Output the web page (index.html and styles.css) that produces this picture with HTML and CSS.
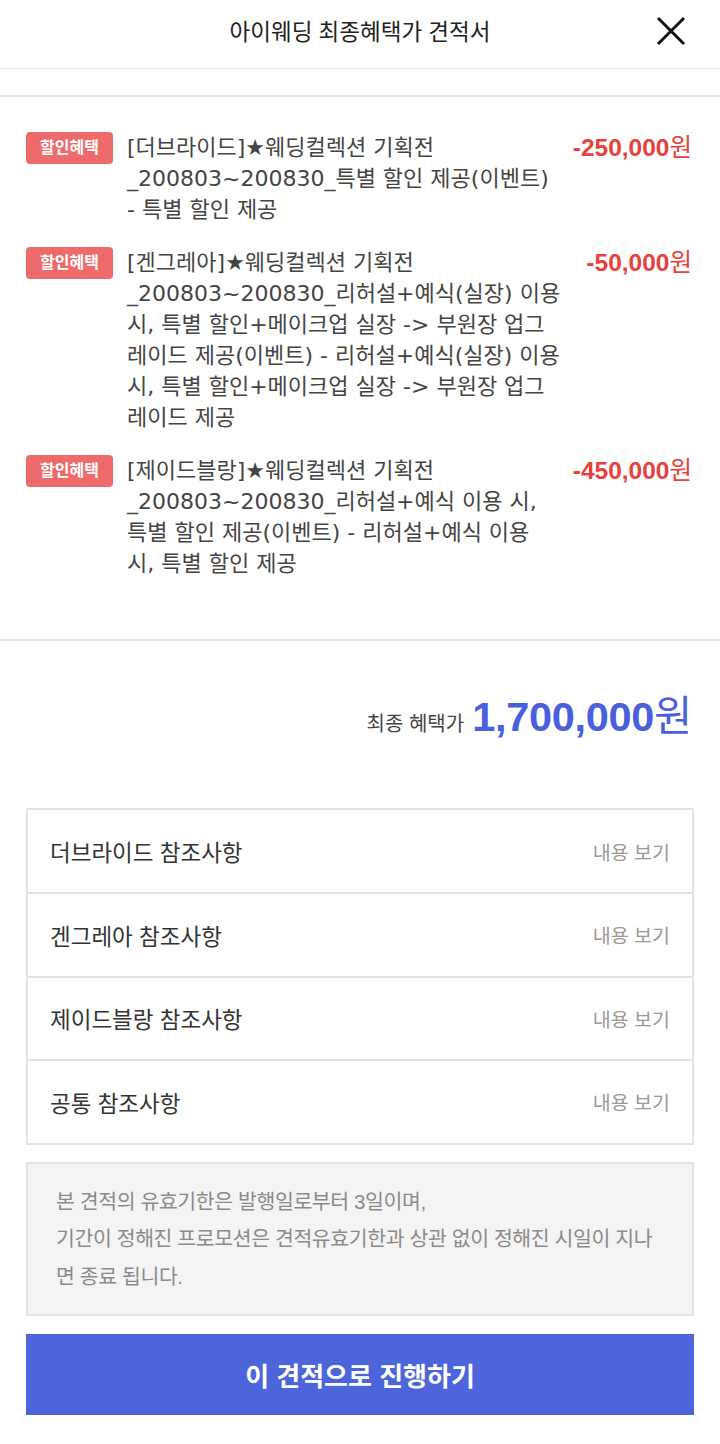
FILE: index.html
```html
<!DOCTYPE html>
<html lang="ko">

<head>
    <meta charset="UTF-8">
    <meta name="viewport" content="width=device-width, initial-scale=1.0">
    <title>아이웨딩 최종혜택가 견적서</title>
    <link rel="stylesheet" href="styles.css">
</head>

<body>
    <header class="top-bar">
        <h1 class="top-title">아이웨딩 최종혜택가 견적서</h1>
        <button class="close-btn" type="button" aria-label="닫기">
            <svg width="32" height="32" viewBox="0 0 32 32">
                <path d="M3 3 L29 29 M29 3 L3 29" stroke="#111" stroke-width="3" fill="none" />
            </svg>
        </button>
    </header>
    <div class="spacer"></div>

    <section class="benefits">
        <div class="benefit">
            <span class="badge">할인혜택</span>
            <p class="benefit-text">[더브라이드]★웨딩컬렉션 기획전 _200803~200830_특별 할인 제공(이벤트) - 특별 할인 제공</p>
            <span class="benefit-price"><b>-250,000</b>원</span>
        </div>
        <div class="benefit">
            <span class="badge">할인혜택</span>
            <p class="benefit-text">[겐그레아]★웨딩컬렉션 기획전 _200803~200830_리허설+예식(실장) 이용 시, 특별 할인+메이크업 실장 -&gt; 부원장 업그레이드 제공(이벤트) - 리허설+예식(실장) 이용 시, 특별 할인+메이크업 실장 -&gt; 부원장 업그레이드 제공</p>
            <span class="benefit-price"><b>-50,000</b>원</span>
        </div>
        <div class="benefit">
            <span class="badge">할인혜택</span>
            <p class="benefit-text">[제이드블랑]★웨딩컬렉션 기획전 _200803~200830_리허설+예식 이용 시, 특별 할인 제공(이벤트) - 리허설+예식 이용 시, 특별 할인 제공</p>
            <span class="benefit-price"><b>-450,000</b>원</span>
        </div>
    </section>

    <section class="summary">
        <div class="total">
            <span class="total-label">최종 혜택가</span>
            <span class="total-amount"><b>1,700,000</b>원</span>
        </div>

        <ul class="notes">
            <li><span>더브라이드 참조사항</span><a href="#">내용 보기</a></li>
            <li><span>겐그레아 참조사항</span><a href="#">내용 보기</a></li>
            <li><span>제이드블랑 참조사항</span><a href="#">내용 보기</a></li>
            <li><span>공통 참조사항</span><a href="#">내용 보기</a></li>
        </ul>

        <div class="notice">
            본 견적의 유효기한은 발행일로부터 3일이며,<br>
            기간이 정해진 프로모션은 견적유효기한과 상관 없이 정해진 시일이 지나면 종료 됩니다.
        </div>

        <button class="proceed-btn" type="button">이 견적으로 진행하기</button>
    </section>
</body>

</html>
```

FILE: styles.css
```css
* {
    margin: 0;
    padding: 0;
    box-sizing: border-box;
}

body {
    font-family: "Liberation Sans", "Noto Sans CJK KR", sans-serif;
    background: #fff;
    color: #333;
    width: 720px;
}

.top-bar {
    height: 69px;
    border-bottom: 1px solid #e6e6e6;
    display: flex;
    align-items: center;
    justify-content: center;
    position: relative;
}

.top-title {
    font-size: 22.5px;
    font-weight: normal;
    color: #222;
    margin-top: -8px;
}

.close-btn {
    position: absolute;
    right: 33px;
    top: 15px;
    border: none;
    background: none;
    width: 32px;
    height: 32px;
}

.spacer {
    height: 28px;
    border-bottom: 2px solid #e6e6e6;
}

.benefits {
    padding: 35px 28px 60px 26px;
    border-bottom: 2px solid #e6e6e6;
    display: flex;
    flex-direction: column;
    gap: 22px;
}

.benefit {
    display: flex;
    align-items: flex-start;
}

.badge {
    flex: none;
    width: 87px;
    height: 32px;
    line-height: 32px;
    background: #ee6b6b;
    color: #fff;
    font-size: 16px;
    font-weight: bold;
    text-align: center;
    border-radius: 4px;
}

.benefit-text {
    width: 436px;
    margin-left: 14px;
    font-family: "DejaVu Sans", "Noto Sans CJK KR", sans-serif;
    font-size: 22px;
    line-height: 31px;
    color: #444;
}

.benefit-price {
    flex: 1;
    text-align: right;
    font-size: 24.5px;
    line-height: 31px;
    color: #e8413b;
}

.summary {
    padding: 0 26px;
}

.total {
    display: flex;
    justify-content: flex-end;
    align-items: baseline;
    gap: 8px;
    padding: 42px 2px 0 0;
    height: 167px;
}

.total-label {
    font-size: 20px;
    color: #444;
}

.total-amount {
    font-size: 41.5px;
    color: #4a5fdc;
    letter-spacing: -0.3px;
}

.notes {
    list-style: none;
    border: 2px solid #e3e3e3;
}

.notes li {
    height: 83.5px;
    display: flex;
    align-items: center;
    justify-content: space-between;
    padding: 0 22px 0 22px;
    border-top: 2px solid #e3e3e3;
}

.notes li:first-child {
    border-top: none;
    height: 82px;
}

.notes span {
    font-size: 22.5px;
    color: #333;
}

.notes a {
    font-size: 19.5px;
    color: #999;
    text-decoration: none;
}

.notice {
    margin-top: 17px;
    background: #f4f4f4;
    border: 2px solid #e3e3e3;
    padding: 19px 28px 19px;
    font-size: 20.5px;
    line-height: 37.5px;
    color: #8a8a8a;
    letter-spacing: -0.4px;
    word-break: break-all;
}

.proceed-btn {
    display: block;
    width: 100%;
    height: 81px;
    margin-top: 18px;
    border: none;
    background: #4d65db;
    color: #fff;
    font-family: inherit;
    font-size: 26px;
    font-weight: bold;
}
```
